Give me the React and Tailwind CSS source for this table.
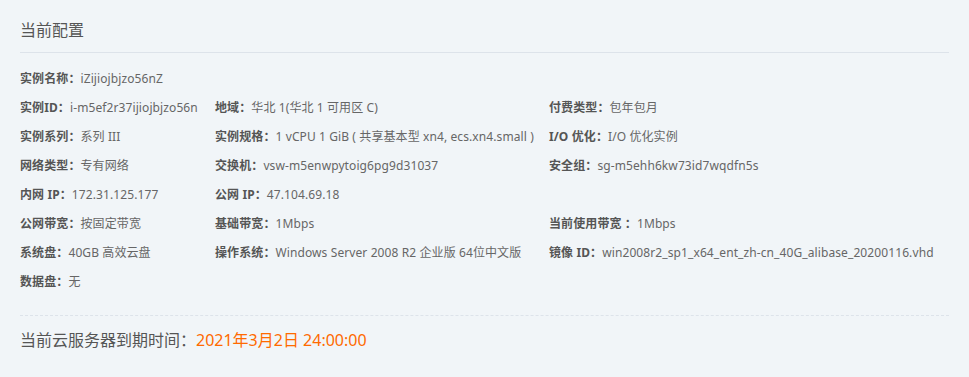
import React from 'react';

const rows = [
  [['实例名称', 'iZijiojbjzo56nZ']],
  [['实例ID', 'i-m5ef2r37ijiojbjzo56n'], ['地域', '华北 1(华北 1 可用区 C)'], ['付费类型', '包年包月']],
  [['实例系列', '系列 III'], ['实例规格', '1 vCPU 1 GiB ( 共享基本型 xn4, ecs.xn4.small )'], ['I/O 优化', 'I/O 优化实例']],
  [['网络类型', '专有网络'], ['交换机', 'vsw-m5enwpytoig6pg9d31037'], ['安全组', 'sg-m5ehh6kw73id7wqdfn5s']],
  [['内网 IP', '172.31.125.177'], ['公网 IP', '47.104.69.18']],
  [['公网带宽', '按固定带宽'], ['基础带宽', '1Mbps'], ['当前使用带宽 ', '1Mbps']],
  [['系统盘', '40GB 高效云盘'], ['操作系统', 'Windows Server 2008 R2 企业版 64位中文版'], ['镜像 ID', 'win2008r2_sp1_x64_ent_zh-cn_40G_alibase_20200116.vhd']],
  [['数据盘', '无']],
];

const Field = ({ item }) => {
  if (!item) return <div />;
  const [label, value] = item;
  return (
    <div className="whitespace-nowrap">
      <span className="font-bold text-[#555]">{label}：</span>
      <span className="text-[#666]">{value}</span>
    </div>
  );
};

const App = () => {
  return (
    <div
      className="w-[969px] h-[377px] bg-[#f1f5f8] px-5 pt-[18px]"
      style={{ fontFamily: '"Noto Sans", "Noto Sans CJK SC", sans-serif' }}
    >
      {/* 当前配置 */}
      <h3 className="text-base leading-6 text-[#555] pb-[10px] border-b border-[#dde3ea]">当前配置</h3>

      <div className="mt-[11px] text-xs tracking-[0.1px]">
        {rows.map((row, i) => (
          <div key={i} className="grid grid-cols-[195px_334px_1fr] leading-[29px]">
            <Field item={row[0]} />
            <Field item={row[1]} />
            <Field item={row[2]} />
          </div>
        ))}
      </div>

      <div className="mt-[19px] border-t border-dashed border-[#dde3ea]" />

      <div className="mt-3 text-base leading-6 text-[#555]">
        当前云服务器到期时间：<span className="text-[#ff6a00]">2021年3月2日 24:00:00</span>
      </div>
    </div>
  );
};

export default App;
